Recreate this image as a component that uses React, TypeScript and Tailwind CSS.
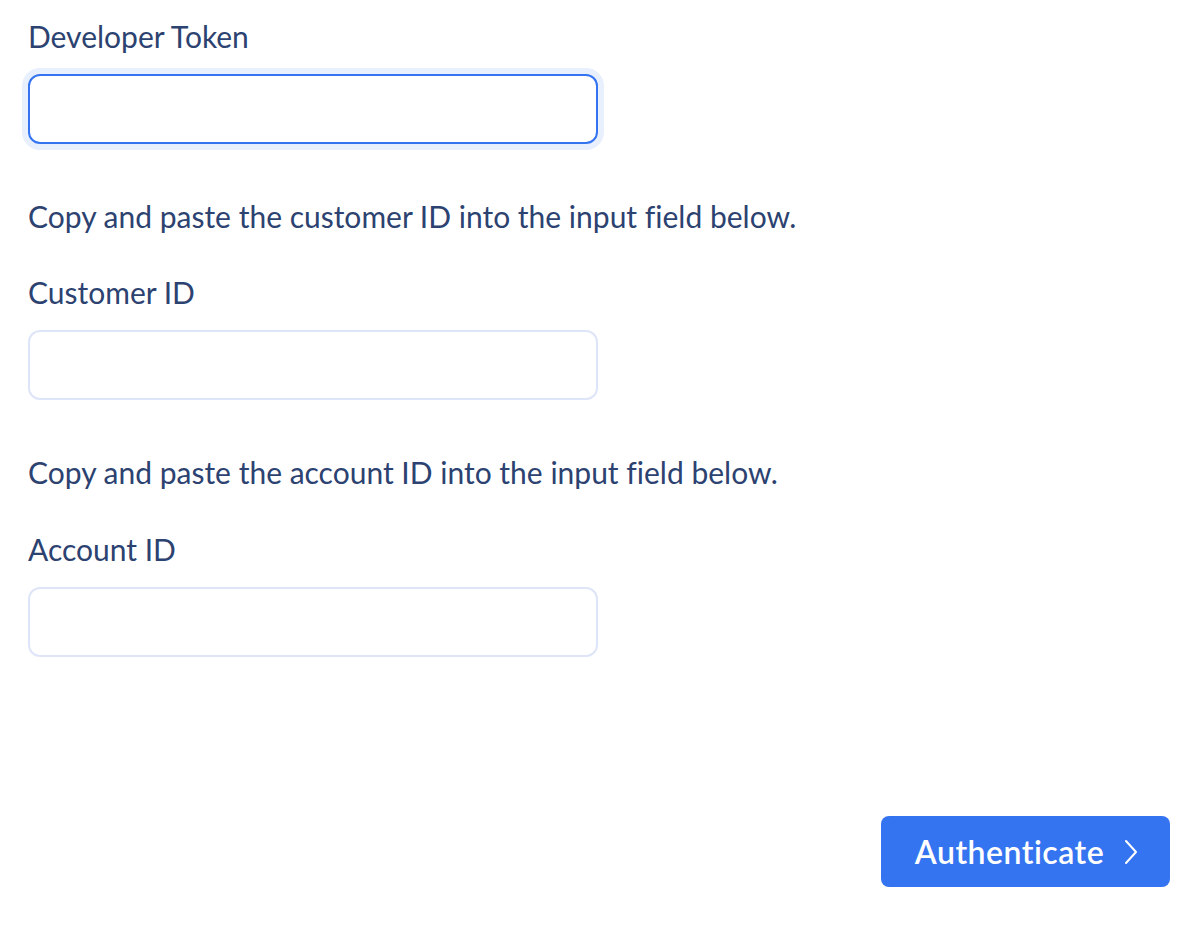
import { ChangeEvent, useState } from "react";

const textFont = { fontFamily: "Lato, 'Noto Sans', sans-serif" };

function Field({ label, value, onChange, focused }: { label: string; value: string; onChange: (v: string) => void; focused?: boolean }) {
    return (
        <div className="flex flex-col">
            <label className="text-[30px] leading-[36px] text-[#2c4270]">{label}</label>
            <input
                value={value}
                onChange={(e: ChangeEvent<HTMLInputElement>) => onChange(e.target.value)}
                className={`mt-[20px] block h-[70px] w-[570px] rounded-[12px] border-2 bg-white px-4 text-[26px] text-[#2c4270] outline-none ${focused ? "border-[#3574f0] shadow-[0_0_0_6px_#e8f0fd]" : "border-[#dfe5f8]"}`}
            />
        </div>
    );
}

export default function App() {
    const [token, setToken] = useState("");
    const [customer, setCustomer] = useState("");
    const [account, setAccount] = useState("");

    return (
        <div className="min-h-[926px] w-[1194px] bg-white pl-[28px] pr-[24px] pt-[18px] [font-variant-ligatures:none]" style={textFont}>
            <Field label="Developer Token" value={token} onChange={setToken} focused />

            <p className="mt-[54px] text-[30px] leading-[36px] text-[#2c4270]">Copy and paste the customer ID into the input field below.</p>
            <div className="mt-[40px]">
                <Field label="Customer ID" value={customer} onChange={setCustomer} />
            </div>

            <p className="mt-[54px] text-[30px] leading-[36px] text-[#2c4270]">Copy and paste the account ID into the input field below.</p>
            <div className="mt-[41px]">
                <Field label="Account ID" value={account} onChange={setAccount} />
            </div>

            <div className="mt-[159px] flex justify-end">
                <button className="flex h-[71px] w-[289px] items-center justify-center gap-[20px] rounded-[8px] bg-[#3574f0] pl-[2px] text-[32px] font-semibold tracking-[0.5px] text-white">
                    <span>Authenticate</span>
                    <svg width="14" height="26" viewBox="0 0 14 26" fill="none" stroke="currentColor" strokeWidth="2" strokeLinecap="round" strokeLinejoin="round">
                        <path d="M2 2l10 11L2 24" />
                    </svg>
                </button>
            </div>
        </div>
    );
}
